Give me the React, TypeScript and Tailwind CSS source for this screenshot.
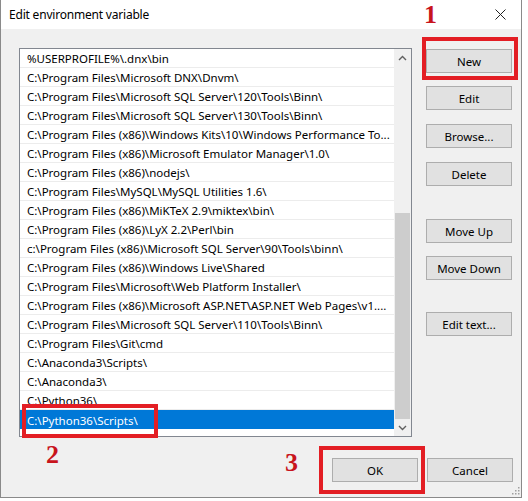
import React from 'react';

const paths = [
  '%USERPROFILE%\\.dnx\\bin',
  'C:\\Program Files\\Microsoft DNX\\Dnvm\\',
  'C:\\Program Files\\Microsoft SQL Server\\120\\Tools\\Binn\\',
  'C:\\Program Files\\Microsoft SQL Server\\130\\Tools\\Binn\\',
  'C:\\Program Files (x86)\\Windows Kits\\10\\Windows Performance To...',
  'C:\\Program Files (x86)\\Microsoft Emulator Manager\\1.0\\',
  'C:\\Program Files (x86)\\nodejs\\',
  'C:\\Program Files\\MySQL\\MySQL Utilities 1.6\\',
  'C:\\Program Files (x86)\\MiKTeX 2.9\\miktex\\bin\\',
  'C:\\Program Files (x86)\\LyX 2.2\\Perl\\bin',
  'c:\\Program Files (x86)\\Microsoft SQL Server\\90\\Tools\\binn\\',
  'C:\\Program Files (x86)\\Windows Live\\Shared',
  'C:\\Program Files\\Microsoft\\Web Platform Installer\\',
  'C:\\Program Files (x86)\\Microsoft ASP.NET\\ASP.NET Web Pages\\v1....',
  'C:\\Program Files\\Microsoft SQL Server\\110\\Tools\\Binn\\',
  'C:\\Program Files\\Git\\cmd',
  'C:\\Anaconda3\\Scripts\\',
  'C:\\Anaconda3\\',
  'C:\\Python36\\',
  'C:\\Python36\\Scripts\\',
];

// side buttons with their top margin (px) in the column
const sideButtons = [
  { label: 'New', mt: 'mt-[1px]' },
  { label: 'Edit', mt: 'mt-[13px]' },
  { label: 'Browse...', mt: 'mt-[14px]' },
  { label: 'Delete', mt: 'mt-[14px]' },
  { label: 'Move Up', mt: 'mt-[33px]' },
  { label: 'Move Down', mt: 'mt-[13px]' },
  { label: 'Edit text...', mt: 'mt-[32px]' },
];

function WinButton({ label, className = '' }: { label: string; className?: string }) {
  return (
    <div className={`w-[86px] h-[24px] bg-[#e1e1e1] border border-[#adadad] flex items-center justify-center pt-[1px] text-black ${className}`}>
      {label}
    </div>
  );
}

function Chevron({ up }: { up?: boolean }) {
  return (
    <svg width="9" height="6" viewBox="0 0 9 6">
      <path d={up ? 'M1 5 L4.5 1.5 L8 5' : 'M1 1 L4.5 4.5 L8 1'} fill="none" stroke="#606060" strokeWidth="1.4" />
    </svg>
  );
}

export default function App() {
  return (
    <div className="w-[528px] h-[501px] bg-white relative overflow-hidden font-['Noto_Sans',sans-serif] text-[11.5px] text-black">
      <div className="w-[522px] h-[498px] bg-[#f0f0f0] border-x border-b border-[#8a8a8a] flex flex-col">
        {/* title bar */}
        <div className="h-[29px] bg-white flex items-center justify-between pl-[8px] pr-[15px]">
          <span className="text-[12px] tracking-[-0.2px]">Edit environment variable</span>
          <svg width="11" height="11" viewBox="0 0 11 11">
            <path d="M0.5 0.5 L10.5 10.5 M10.5 0.5 L0.5 10.5" stroke="#222" strokeWidth="1" />
          </svg>
        </div>

        <div className="flex-1 flex flex-col pl-[18px] pr-[8px] pt-[19px]">
          <div className="flex">
            {/* list box */}
            <div className="w-[393px] h-[389px] border border-[#828790] bg-white flex">
              <div className="flex-1 flex flex-col">
                {paths.map((p, i) => {
                  const selected = i === paths.length - 1;
                  return (
                    <div
                      key={p}
                      className={`h-[19px] shrink-0 pl-[7px] pt-[2px] flex items-center whitespace-nowrap overflow-hidden ${selected ? 'bg-[#0078d7] text-white' : 'border-b border-[#ececec]'}`}
                    >
                      {p}
                    </div>
                  );
                })}
              </div>
              {/* scrollbar */}
              <div className="w-[17px] bg-[#f0f0f0] flex flex-col">
                <div className="h-[17px] flex items-center justify-center">
                  <Chevron up />
                </div>
                <div className="flex-1 flex flex-col justify-end px-[1px]">
                  <div className="h-[206px] bg-[#cdcdcd]"></div>
                </div>
                <div className="h-[17px] flex items-center justify-center">
                  <Chevron />
                </div>
              </div>
            </div>

            {/* button column */}
            <div className="ml-[14px] flex flex-col">
              {sideButtons.map((b) => (
                <WinButton key={b.label} label={b.label} className={b.mt} />
              ))}
            </div>
          </div>

          {/* OK / Cancel */}
          <div className="mt-[21px] flex justify-end gap-[9px]">
            <WinButton label="OK" />
            <WinButton label="Cancel" />
          </div>
        </div>
      </div>

      {/* resize grip */}
      <svg className="absolute left-[511px] top-[486px]" width="9" height="9" viewBox="0 0 9 9">
        {[[7, 1], [7, 4], [4, 4], [7, 7], [4, 7], [1, 7]].map(([x, y]) => (
          <rect key={`${x}-${y}`} x={x} y={y} width="1.5" height="1.5" fill="#a0a0a0" />
        ))}
      </svg>

      {/* annotations */}
      <div className="absolute left-[422px] top-[37px] w-[96px] h-[43px] border-[4px] border-[#e31e24]"></div>
      <div className="absolute left-[22px] top-[404px] w-[136px] h-[34px] border-[4px] border-[#e31e24]"></div>
      <div className="absolute left-[319px] top-[446px] w-[106px] h-[48px] border-[4px] border-[#e31e24]"></div>
      <span className="absolute left-[424px] top-[2px] font-['Liberation_Serif',serif] font-bold text-[26px] leading-none text-[#c8141c]">1</span>
      <span className="absolute left-[46px] top-[442px] font-['Liberation_Serif',serif] font-bold text-[26px] leading-none text-[#c8141c]">2</span>
      <span className="absolute left-[285px] top-[450px] font-['Liberation_Serif',serif] font-bold text-[26px] leading-none text-[#c8141c]">3</span>
    </div>
  );
}
